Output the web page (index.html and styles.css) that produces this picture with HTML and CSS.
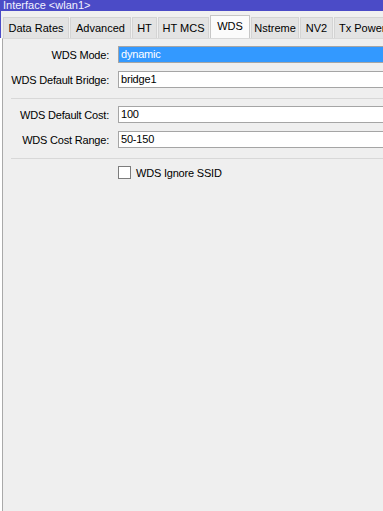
FILE: index.html
```html
<!DOCTYPE html>
<html>
  <head>
    <title>Interface &lt;wlan1&gt;</title>
    <link rel="stylesheet" href="styles.css">
  </head>
  <body>
    <div class="window">
      <div class="titlebar">Interface &lt;wlan1&gt;</div>

      <div class="tabs">
        <div class="tab tab-rates">Data Rates</div>
        <div class="tab tab-adv">Advanced</div>
        <div class="tab tab-ht">HT</div>
        <div class="tab tab-mcs">HT MCS</div>
        <div class="tab tab-wds active">WDS</div>
        <div class="tab tab-nstreme">Nstreme</div>
        <div class="tab tab-nv2">NV2</div>
        <div class="tab tab-power">Tx Power</div>
      </div>

      <div class="panel">
        <div class="row">
          <label class="field-label">WDS Mode:</label>
          <div class="field selected">dynamic</div>
        </div>
        <div class="row">
          <label class="field-label">WDS Default Bridge:</label>
          <div class="field">bridge1</div>
        </div>

        <div class="divider"></div>

        <div class="row">
          <label class="field-label">WDS Default Cost:</label>
          <div class="field">100</div>
        </div>
        <div class="row">
          <label class="field-label">WDS Cost Range:</label>
          <div class="field">50-150</div>
        </div>

        <div class="divider"></div>

        <div class="check-row">
          <span class="checkbox"></span>
          <span class="check-label">WDS Ignore SSID</span>
        </div>
      </div>
    </div>
  </body>
</html>
```

FILE: styles.css
```css
html,
body
{
  margin: 0;
  height: 100%;
  overflow: hidden;
}

body
{
  font-family: "Liberation Sans", Arial, sans-serif;
  font-size: 11px;
  color: #000;
  background-color: #fff;
}

.window
{
  display: flex;
  flex-direction: column;
  height: 511px;
}

.titlebar
{
  height: 11px;
  padding-left: 3px;
  background-color: #4b4bc7;
  color: #f2f2ff;
  font-size: 11px;
  line-height: 11px;
  overflow: hidden;
  white-space: nowrap;
}

/* tab strip */
.tabs
{
  display: flex;
  align-items: flex-end;
  height: 27px;
  padding-left: 2px;
  background-color: #f0f0f0;
  border-left: 1px solid #4b4bc7;
  white-space: nowrap;
  overflow: hidden;
}

.tab
{
  flex: none;
  box-sizing: border-box;
  height: 21px;
  margin-right: 1px;
  padding-top: 4px;
  text-align: center;
  background-color: #e3e3e3;
  border: 1px solid #d4d4d4;
  border-bottom: none;
}

.tab-rates { width: 66px; }
.tab-adv { width: 61px; }
.tab-ht { width: 25px; }
.tab-mcs { width: 51px; }
.tab-wds { width: 40px; }
.tab-nstreme { width: 48px; }
.tab-nv2 { width: 33px; }
.tab-power { width: 60px; text-align: left; padding-left: 4px; }

.tab.active
{
  height: 24px;
  padding-top: 4px;
  margin-bottom: -1px;
  background-color: #fbfbfb;
  border-color: #c6c6c6;
  position: relative;
  z-index: 1;
}

/* form area */
.panel
{
  flex: 1;
  display: flex;
  flex-direction: column;
  margin-left: 2px;
  padding-top: 7px;
  background-color: #efefef;
  border-left: 1px solid #a9a9a9;
  border-top: 1px solid #d9d9d9;
  letter-spacing: -0.2px;
}

.row
{
  display: flex;
  align-items: center;
  height: 17px;
  margin-bottom: 8px;
}

.field-label
{
  flex: none;
  width: 106px;
  margin-right: 9px;
  text-align: right;
  white-space: nowrap;
}

.field
{
  flex: none;
  box-sizing: border-box;
  width: 300px;
  height: 17px;
  padding-left: 2px;
  line-height: 15px;
  background-color: #fff;
  border: 1px solid #a5a5a5;
}

.field.selected
{
  background-color: #3399ff;
  color: #fff;
}

.divider
{
  height: 1px;
  margin: 2px 0 7px 8px;
  background-color: #d8d8d8;
}

.check-row
{
  display: flex;
  align-items: center;
  padding-left: 115px;
}

.checkbox
{
  box-sizing: border-box;
  width: 13px;
  height: 13px;
  margin-right: 5px;
  background-color: #fff;
  border: 1px solid #7c7c7c;
}
```
